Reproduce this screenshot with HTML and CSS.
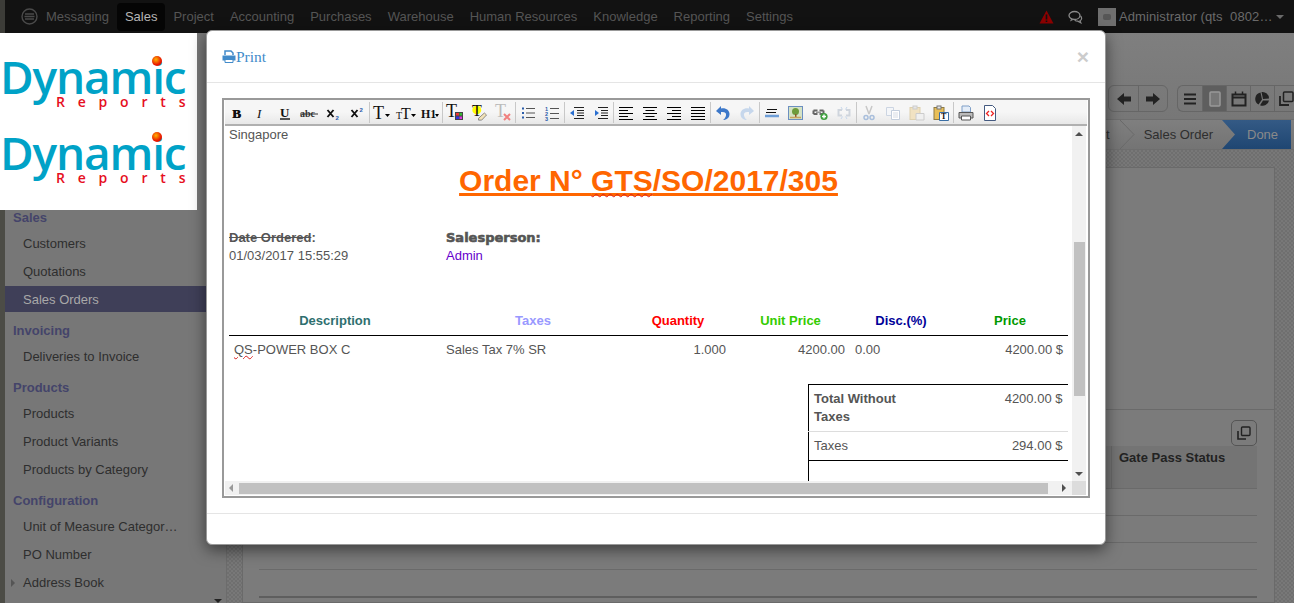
FILE: index.html
```html
<!DOCTYPE html>
<html lang="en">
<head>
    <meta charset="UTF-8">
    <title>Sales Orders</title>
    <link rel="stylesheet" href="styles.css">
</head>
<body>

<div class="page">
    <header class="topbar">
        <svg class="nav-logo" width="17" height="17" viewBox="0 0 17 17"><circle cx="8.5" cy="8.5" r="7.5" fill="none" stroke="#4a4a4a" stroke-width="1.4"/><path d="M4 6h9M3.5 8.5h10M4 11h9" stroke="#4a4a4a" stroke-width="1.6"/></svg>
        <nav class="nav">
            <a>Messaging</a>
            <a class="active">Sales</a>
            <a>Project</a>
            <a>Accounting</a>
            <a>Purchases</a>
            <a>Warehouse</a>
            <a>Human Resources</a>
            <a>Knowledge</a>
            <a>Reporting</a>
            <a>Settings</a>
        </nav>
        <div class="user">
            <svg width="15" height="14" viewBox="0 0 15 14"><path d="M7.5 0.5L14.5 13.5H0.5Z" fill="#8c0000"/><path d="M7.5 4.5v5M7.5 10.5v1.6" stroke="#111" stroke-width="1.6"/></svg>
            <svg class="chat" width="15" height="14" viewBox="0 0 15 14"><ellipse cx="6.5" cy="5.5" rx="5.5" ry="4" fill="none" stroke="#8a8a8a" stroke-width="1.3"/><path d="M3 9L2 11.5 6 9.5" fill="#8a8a8a"/><path d="M12.5 6c2 2 1 4-.5 4.8l.8 2-3-1.6c-1.2 0-2.3-.4-3-1" fill="none" stroke="#8a8a8a" stroke-width="1.2"/></svg>
            <span class="avatar"><i></i></span>
            <span class="user-name">Administrator (qts&nbsp; 0802…</span>
            <span class="caret"></span>
        </div>
    </header>

    <div class="main">
        <aside class="leftcol">
            <div class="logo">
                <div class="logo-mark">
                    <span class="logo-word">Dynamic</span>
                    <span class="logo-ball"></span>
                    <span class="logo-sub">Reports</span>
                </div>
                <div class="logo-mark">
                    <span class="logo-word">Dynamic</span>
                    <span class="logo-ball"></span>
                    <span class="logo-sub">Reports</span>
                </div>
            </div>
            <div class="menu">
                <div class="menu-head">Sales</div>
                <a class="menu-item">Customers</a>
                <a class="menu-item">Quotations</a>
                <a class="menu-item selected">Sales Orders</a>
                <div class="menu-head">Invoicing</div>
                <a class="menu-item">Deliveries to Invoice</a>
                <div class="menu-head">Products</div>
                <a class="menu-item">Products</a>
                <a class="menu-item">Product Variants</a>
                <a class="menu-item">Products by Category</a>
                <div class="menu-head">Configuration</div>
                <a class="menu-item">Unit of Measure Categor…</a>
                <a class="menu-item">PO Number</a>
                <a class="menu-item has-arrow">Address Book</a>
                <span class="menu-down"></span>
            </div>
        </aside>

        <main class="content">
            <div class="control-panel">
                <div class="btn-group">
                    <span class="cp-btn wide"><svg width="16" height="14" viewBox="0 0 16 14"><path d="M8 1L1 7l7 6V9.5h7v-5H8Z" fill="#222"/></svg></span>
                    <span class="cp-btn wide"><svg width="16" height="14" viewBox="0 0 16 14"><path d="M8 1l7 6-7 6V9.5H1v-5h7Z" fill="#222"/></svg></span>
                </div>
                <div class="btn-group views">
                    <span class="cp-btn"><svg width="14" height="12" viewBox="0 0 14 12"><path d="M1 1.5h12M1 6h12M1 10.5h12" stroke="#222" stroke-width="2"/></svg></span>
                    <span class="cp-btn on"><svg width="12" height="16" viewBox="0 0 12 16"><rect x="1" y="1" width="10" height="14" rx="1" fill="#777" stroke="#999" stroke-width="1.5"/></svg></span>
                    <span class="cp-btn"><svg width="16" height="16" viewBox="0 0 16 16"><path d="M1.5 3.5h13v11h-13zM1.5 6.5h13" fill="none" stroke="#222" stroke-width="2"/><path d="M4.5 0.5v3M11.5 0.5v3" stroke="#222" stroke-width="1.5"/></svg></span>
                    <span class="cp-btn"><svg width="15" height="15" viewBox="0 0 15 15"><path d="M6.5 1a6.5 6.5 0 0 1 7.5 6.5L8 8Z" fill="#222"/><path d="M5.5 1.5L7 8.5 3.5 13.5A6.5 6.5 0 0 1 5.5 1.5Z" fill="#222"/><path d="M8 9.5h6A6.5 6.5 0 0 1 5 14.2Z" fill="#222"/></svg></span>
                    <span class="cp-btn"><svg width="15" height="15" viewBox="0 0 15 15"><rect x="4.5" y="1" width="9.5" height="9.5" rx="1" fill="none" stroke="#222" stroke-width="1.5"/><path d="M1 5v9h9" fill="none" stroke="#222" stroke-width="1.8"/></svg></span>
                </div>
            </div>

            <div class="statusbar">
                <span class="stage">nt</span>
                <svg class="chev" width="16" height="29" viewBox="0 0 16 29"><path d="M1 0l14 14.5L1 29" fill="none" stroke="#6a6a6a"/></svg>
                <span class="stage">Sales Order</span>
                <span class="stage done">Done</span>
            </div>

            <div class="sheet-bg">
                <div class="sheet">
                    <div class="sheet-top"></div>
                    <div class="sheet-body">
                        <div class="sheet-tools">
                            <span class="copy-btn"><svg width="14" height="14" viewBox="0 0 14 14"><rect x="4.5" y="1" width="8.5" height="8.5" rx="1" fill="none" stroke="#222" stroke-width="1.4"/><path d="M1 5v8h8" fill="none" stroke="#222" stroke-width="1.6"/></svg></span>
                        </div>
                        <div class="grid-head"><span class="grid-col">Gate Pass Status</span></div>
                        <div class="grid-row"></div>
                        <div class="grid-row"></div>
                        <div class="grid-row"></div>
                        <div class="grid-row last"></div>
                    </div>
                </div>
            </div>
        </main>
    </div>
</div>

<!-- print preview dialog -->
<div class="modal">
    <div class="modal-header">
        <a class="print-link">
            <svg width="14" height="13" viewBox="0 0 14 13"><path d="M3 5V1h6l2 2v2" fill="none" stroke="#428bca" stroke-width="1.5"/><path d="M0.5 5.5h13v5H11V9H3v1.5H.5Z" fill="#428bca"/><path d="M3 9.5h8v3H3z" fill="#fff" stroke="#428bca"/></svg>Print</a>
        <span class="close">×</span>
    </div>
    <div class="modal-body">
        <div class="editor">
            <div class="toolbar">
                <span class="tb"><svg viewBox="0 0 16 16"><text x="3" y="13" class="ic-serif">B</text><text x="3.8" y="13" class="ic-serif">B</text></svg></span>
                <span class="tb"><svg viewBox="0 0 16 16"><text x="4" y="13" class="ic-serif ital">I</text></svg></span>
                <span class="tb"><svg viewBox="0 0 16 16"><text x="3" y="11.5" class="ic-serif">U</text><path d="M3 14h10" stroke="#000" stroke-width="1.3"/></svg></span>
                <span class="tb"><svg viewBox="0 0 18 16" class="w18"><text x="0" y="12" class="ic-serif small">abc</text><path d="M0 9h18" stroke="#333"/></svg></span>
                <span class="tb"><svg viewBox="0 0 16 16"><path d="M2.5 5l6 7M8.5 5l-6 7" stroke="#111" stroke-width="1.9"/><text x="10.5" y="14.5" class="ic-mini">2</text></svg></span>
                <span class="tb"><svg viewBox="0 0 16 16"><path d="M2.5 5l6 7M8.5 5l-6 7" stroke="#111" stroke-width="1.9"/><text x="10.5" y="6.5" class="ic-mini">2</text></svg></span>
                <span class="tb-sep"></span>
                <span class="tb"><svg viewBox="0 0 18 16" class="w18"><text x="0" y="14" class="ic-serif big">T</text><path d="M12 9h5l-2.5 3Z"/></svg></span>
                <span class="tb"><svg viewBox="0 0 20 16" class="w20"><text x="0" y="14" class="ic-serif mid">T</text><text x="5" y="14" class="ic-serif big2">T</text><path d="M15 9h5l-2.5 3Z"/></svg></span>
                <span class="tb"><svg viewBox="0 0 20 16" class="w20"><text x="1" y="13" class="ic-serif h1">H1</text><path d="M15 9h4l-2 3Z"/></svg></span>
                <span class="tb-sep"></span>
                <span class="tb"><svg viewBox="0 0 18 16" class="w18"><text x="0" y="12" class="ic-serif big">T</text><rect x="9" y="7" width="8" height="8" fill="#444"/><path d="M10 8h3v2.5h-3z" fill="#e33"/><path d="M13.5 8H16v2.5h-2.5z" fill="#3b3"/><path d="M10 11.5h3V14h-3z" fill="#33d"/><path d="M13.5 11.5H16V14h-2.5z" fill="#d3d"/></svg></span>
                <span class="tb"><svg viewBox="0 0 18 18" class="w18"><circle cx="6.5" cy="5.5" r="5" fill="#ff0"/><text x="1" y="12" class="ic-serif big">T</text><path d="M8.5 15l6.5-6 2.5 2.2-5.5 5.8H8.5Z" fill="#f3e3b8" stroke="#666" stroke-width=".8"/></svg></span>
                <span class="tb"><svg viewBox="0 0 18 16" class="w18"><text x="1" y="12" class="ic-serif big fade">T</text><path d="M10 9l6 6M16 9l-6 6" stroke="#f08080" stroke-width="2"/></svg></span>
                <span class="tb-sep"></span>
                <span class="tb"><svg viewBox="0 0 16 16"><path d="M2 3.5h2M2 8h2M2 12.5h2" stroke="#2a5caa" stroke-width="2.2"/><path d="M6 3.5h9M6 8h9M6 12.5h9" stroke="#555"/></svg></span>
                <span class="tb"><svg viewBox="0 0 16 16"><text x="1" y="5.5" class="ic-num">1</text><text x="1" y="10.5" class="ic-num">2</text><text x="1" y="15.5" class="ic-num">3</text><path d="M6 3.5h9M6 8.5h9M6 13.5h9" stroke="#555"/></svg></span>
                <span class="tb-sep"></span>
                <span class="tb"><svg viewBox="0 0 16 16"><path d="M1 8l4-3v6Z" fill="#2a6fd0"/><path d="M5 2.5h10M8 5.5h7M8 8h7M8 10.5h7M5 13.5h10" stroke="#222" stroke-width="1.2"/></svg></span>
                <span class="tb"><svg viewBox="0 0 16 16"><path d="M6 8L2 5v6Z" fill="#2a6fd0"/><path d="M5 2.5h10M8 5.5h7M8 8h7M8 10.5h7M5 13.5h10" stroke="#222" stroke-width="1.2"/></svg></span>
                <span class="tb-sep"></span>
                <span class="tb"><svg viewBox="0 0 16 16"><path d="M1 2.5h14M1 5.5h9M1 8.5h14M1 11.5h9M1 14.5h14" stroke="#000"/></svg></span>
                <span class="tb"><svg viewBox="0 0 16 16"><path d="M1 2.5h14M3.5 5.5h9M1 8.5h14M3.5 11.5h9M1 14.5h14" stroke="#000"/></svg></span>
                <span class="tb"><svg viewBox="0 0 16 16"><path d="M1 2.5h14M6 5.5h9M1 8.5h14M6 11.5h9M1 14.5h14" stroke="#000"/></svg></span>
                <span class="tb"><svg viewBox="0 0 16 16"><path d="M1 2.5h14M1 5.5h14M1 8.5h14M1 11.5h14M1 14.5h14" stroke="#000"/></svg></span>
                <span class="tb-sep"></span>
                <span class="tb"><svg viewBox="0 0 16 16"><path d="M6 1L1 6l5 4V7c4-.5 5.5 1 5 3.5-.3 1.8-1.5 3.5-3 4.5 4 0 6.5-2.5 6.5-6 0-4-4-6.5-8.5-5.5Z" fill="#3d78c9"/></svg></span>
                <span class="tb"><svg viewBox="0 0 16 16"><path d="M10 1l5 5-5 4V7c-4-.5-5.5 1-5 3.5.3 1.8 1.5 3.5 3 4.5-4 0-6.5-2.5-6.5-6 0-4 4-6.5 8.5-5.5Z" fill="#c6d7ec"/></svg></span>
                <span class="tb-sep"></span>
                <span class="tb"><svg viewBox="0 0 16 16"><path d="M3 4.5h10M2 7.5h10" stroke="#111"/><path d="M1 11h14" stroke="#6f9fd8" stroke-width="2.5"/></svg></span>
                <span class="tb"><svg viewBox="0 0 16 16"><rect x=".5" y="1.5" width="14" height="13" fill="#d5e3c5" stroke="#6c8fc0"/><circle cx="7.5" cy="6.5" r="3.5" fill="#6e9b3c"/><path d="M7 9h1.5v3H7Z" fill="#8a5a2b"/><path d="M2 12.5h11" stroke="#c9a25f" stroke-width="1.5"/></svg></span>
                <span class="tb"><svg viewBox="0 0 16 16"><path d="M1.5 5.5h4M7.5 5.5h4M1.5 9h4M7.5 9h4" stroke="#666" stroke-width="2"/><path d="M1.5 5.5v3.5M11.5 5.5V9" stroke="#666" stroke-width="2"/><path d="M4 7.3h5" stroke="#999" stroke-width="1.6"/><circle cx="12" cy="11.5" r="3.6" fill="#3f9f3f"/><path d="M10 11.5h4M12 9.5v4" stroke="#fff" stroke-width="1.4"/></svg></span>
                <span class="tb"><svg viewBox="0 0 16 16"><path d="M6 5H2.5v5.5H6M10 5h3.5v5.5H10" fill="none" stroke="#cfd5dd" stroke-width="2"/><path d="M5 2l1.5 2.5M11 2L9.5 4.5M5 14l1.5-2.5M11 14l-1.5-2.5" stroke="#c6d7ec"/></svg></span>
                <span class="tb-sep"></span>
                <span class="tb"><svg viewBox="0 0 16 16"><path d="M5 1l3 8M11 1L8 9" stroke="#c8c8c8" stroke-width="1.5"/><circle cx="5" cy="12.5" r="2" fill="none" stroke="#a9bfdc" stroke-width="1.5"/><circle cx="11" cy="12.5" r="2" fill="none" stroke="#a9bfdc" stroke-width="1.5"/></svg></span>
                <span class="tb"><svg viewBox="0 0 16 16"><path d="M1.5 2.5h7v8h-7z" fill="#f4f6f9" stroke="#ccd5e2"/><path d="M6.5 5.5h8v9h-8z" fill="#fff" stroke="#c3cedd"/><path d="M8 8h5M8 10h5M8 12h5" stroke="#d5dbe4"/></svg></span>
                <span class="tb"><svg viewBox="0 0 16 16"><rect x="1" y="2.5" width="10" height="12" fill="#f1e2c2" stroke="#ddd0ae"/><rect x="4" y="1" width="4" height="3" fill="#e6e6e6" stroke="#ccc"/><path d="M7 8.5h8v6.5H7z" fill="#f0f0f0" stroke="#ccc"/></svg></span>
                <span class="tb"><svg viewBox="0 0 16 16"><rect x="1" y="2.5" width="10" height="12" fill="#e8bf58" stroke="#8d7b45"/><rect x="4" y="1" width="4" height="3" fill="#e6e6e6" stroke="#777"/><path d="M6.5 7.5h9v8h-9z" fill="#fff" stroke="#3a6ea5"/><text x="8" y="14.3" class="ic-serif t-mini">T</text></svg></span>
                <span class="tb-sep"></span>
                <span class="tb"><svg viewBox="0 0 16 16"><path d="M4 1h7l1.5 1.5V7H4Z" fill="#e4edf8" stroke="#7f9fc7"/><path d="M1 7.5h14v5.5H1Z" fill="#bbb" stroke="#555"/><path d="M3.5 11h9v4h-9Z" fill="#fff" stroke="#555"/></svg></span>
                <span class="tb"><svg viewBox="0 0 16 16"><path d="M2.5 .5h8l3 3v12h-11Z" fill="#fff" stroke="#445a80"/><path d="M7 6L4.5 8.5 7 11M9 6l2.5 2.5L9 11" fill="none" stroke="#e22" stroke-width="1.3"/></svg></span>
            </div>
            <div class="editor-view">
                <div class="editor-main">
                    <div class="doc">
                        <p class="address">Singapore</p>
                        <h2 class="order-title">Order N° <span class="misspelt">GTS</span>/SO/2017/305</h2>
                        <div class="meta">
                            <div class="meta-col">
                                <strong><s>Date Ordered</s>:</strong>
                                <span>01/03/2017 15:55:29</span>
                            </div>
                            <div class="meta-col">
                                <strong class="heavy">Salesperson:</strong>
                                <span class="admin">Admin</span>
                            </div>
                        </div>
                        <table class="lines">
                            <colgroup><col class="c1"><col class="c2"><col class="c3"><col class="c4"><col class="c5"><col class="c6"></colgroup>
                            <thead>
                                <tr>
                                    <th class="h-desc">Description</th>
                                    <th class="h-tax">Taxes</th>
                                    <th class="h-qty">Quantity</th>
                                    <th class="h-unit">Unit Price</th>
                                    <th class="h-disc">Disc.(%)</th>
                                    <th class="h-price">Price</th>
                                </tr>
                            </thead>
                            <tbody>
                                <tr>
                                    <td><span class="misspelt-small">QS</span>-POWER BOX C</td>
                                    <td>Sales Tax 7% SR</td>
                                    <td class="num">1.000</td>
                                    <td class="num">4200.00</td>
                                    <td>0.00</td>
                                    <td class="num">4200.00 $</td>
                                </tr>
                            </tbody>
                        </table>
                        <table class="totals">
                            <colgroup><col class="t1"><col class="t2"></colgroup>
                            <tr class="t-first">
                                <td><strong>Total Without Taxes</strong></td>
                                <td class="num">4200.00 $</td>
                            </tr>
                            <tr class="t-tax">
                                <td>Taxes</td>
                                <td class="num">294.00 $</td>
                            </tr>
                            <tr class="t-empty"><td colspan="2"></td></tr>
                        </table>
                    </div>
                    <div class="vscroll">
                        <span class="arrow up"></span>
                        <div class="vtrack"><div class="vthumb"></div></div>
                        <span class="arrow down"></span>
                    </div>
                </div>
                <div class="hscroll">
                    <span class="arrow left"></span>
                    <div class="hthumb"></div>
                    <span class="arrow right"></span>
                    <span class="corner"></span>
                </div>
            </div>
        </div>
    </div>
    <div class="modal-footer"></div>
</div>

</body>
</html>
```
FILE: styles.css
```css
html, body {
    margin: 0;
    height: 100%;
    overflow: hidden;
}

body {
    background-color: #7b7b7b;
    color: #222;
    font-family: "Liberation Sans", Arial, sans-serif;
    font-size: 13px;
}

.page {
    display: flex;
    flex-direction: column;
    height: 603px;
}

/* top bar */
.topbar {
    display: flex;
    align-items: center;
    flex: none;
    height: 33px;
    background-color: #121212;
    box-sizing: border-box;
    padding-left: 16px;
    border-left: 5px solid #3c3c38;
}

.nav-logo {
    flex: none;
}

.nav {
    display: flex;
    align-items: center;
    flex: 1;
}

.nav a {
    padding: 7px 8px;
    line-height: 14px;
    color: #555;
    border-radius: 4px;
    white-space: nowrap;
}

.nav a.active {
    color: #b5b5b5;
    background-color: #050505;
}

.user {
    display: flex;
    align-items: center;
    color: #6a6a6a;
    padding-right: 10px;
}

.chat {
    margin-left: 14px;
}

.avatar {
    display: flex;
    align-items: center;
    justify-content: center;
    width: 18px;
    height: 18px;
    margin-left: 15px;
    background-color: #6f6f6f;
}

.avatar i {
    display: block;
    width: 8px;
    height: 6px;
    background-color: #565656;
    border-radius: 2px;
}

.user-name {
    margin-left: 3px;
    white-space: nowrap;
    width: 156px;
    letter-spacing: .1px;
}

.caret {
    width: 0;
    height: 0;
    border: 4px solid transparent;
    border-top-color: #6a6a6a;
    border-bottom: 0;
    margin-left: 1px;
}

.main {
    display: flex;
    flex: 1;
    min-height: 0;
}

/* left column */
.leftcol {
    display: flex;
    flex-direction: column;
    flex: none;
    width: 226px;
    background-color: #777;
}

.logo {
    flex: none;
    box-sizing: border-box;
    width: 197px;
    height: 177px;
    padding: 18px 0 0;
    background-color: #fff;
}

.logo-mark {
    position: relative;
    height: 76px;
}

.logo-word {
    display: block;
    font-family: "Open Sans", sans-serif;
    font-size: 46px;
    font-weight: 600;
    line-height: 50px;
    letter-spacing: -1.2px;
    color: #00a2c7;
}

.logo-ball {
    position: absolute;
    left: 152px;
    top: 5px;
    width: 10px;
    height: 10px;
    border-radius: 50%;
    background: radial-gradient(circle at 40% 35%, #ffb300, #e81500 60%);
}

.logo-sub {
    position: absolute;
    left: 56px;
    top: 43px;
    font-family: "Open Sans", sans-serif;
    font-size: 14px;
    font-weight: 600;
    line-height: 16px;
    letter-spacing: 12.8px;
    color: #e60f1e;
    white-space: nowrap;
}

.menu {
    position: relative;
    flex: 1;
    border-left: 5px solid #4c4c46;
}

.menu-head {
    height: 18px;
    line-height: 18px;
    margin: 9px 0 4px;
    padding-left: 8px;
    font-weight: bold;
    color: #44446a;
}

.menu-head:first-child {
    margin-top: -1px;
}

.menu-item {
    display: block;
    height: 26px;
    line-height: 26px;
    margin-bottom: 2px;
    padding-left: 18px;
    color: #2e2e2e;
    white-space: nowrap;
}

.menu-item.selected {
    margin-top: -1px;
    margin-bottom: 3px;
    line-height: 28px;
    background-color: #3f3f58;
    color: #a8a8a8;
}

.selected + .menu-head {
    margin-top: 10px;
}

.has-arrow::before {
    content: "";
    position: absolute;
    left: 6px;
    margin-top: 9px;
    border: 4px solid transparent;
    border-left-color: #555;
    border-right: 0;
}

.menu-down {
    position: absolute;
    right: 4px;
    bottom: 0;
    border: 4px solid transparent;
    border-top-color: #222;
    border-bottom: 0;
}

/* form view behind the dialog */
.content {
    display: flex;
    flex-direction: column;
    flex: 1;
    min-width: 0;
    border-left: 1px solid #6c6c6c;
}

.control-panel {
    display: flex;
    justify-content: flex-end;
    gap: 9px;
    flex: none;
    box-sizing: border-box;
    height: 87px;
    padding: 52px 0 0;
    overflow: hidden;
    border-bottom: 1px solid #6e6e6e;
    background: linear-gradient(#7f7f7f, #777);
}

.btn-group {
    display: flex;
    height: 25px;
    border: 1px solid #666;
    border-radius: 6px;
}

.btn-group.views {
    width: 116px;
    border-right: 0;
    border-radius: 6px 0 0 6px;
}

.cp-btn {
    display: flex;
    align-items: center;
    justify-content: center;
    flex: none;
    width: 24px;
    border-left: 1px solid #666;
    box-sizing: border-box;
}

.cp-btn:first-child {
    border-left: 0;
}

.cp-btn.wide {
    width: 29px;
}

.cp-btn.on {
    background-color: #5e5e5e;
}

.statusbar {
    display: flex;
    align-items: stretch;
    justify-content: flex-end;
    flex: none;
    height: 29px;
    padding-right: 3px;
    background: linear-gradient(#7f7f7f, #747474);
    border-bottom: 1px solid #6e6e6e;
}

.stage {
    display: flex;
    align-items: center;
    padding: 0 9px 1px;
    color: #2e2e2e;
    white-space: nowrap;
}

.chev {
    flex: none;
}

.stage.done {
    width: 69px;
    box-sizing: border-box;
    padding-left: 25px;
    color: #8a8a8a;
    background: linear-gradient(#345a85, #1f4672);
    clip-path: polygon(0 0, 100% 0, 100% 100%, 0 100%, 13px 50%);
}

.sheet-bg {
    flex: 1;
    min-height: 0;
    padding: 17px 19px 0 15px;
    background: repeating-conic-gradient(#6f6f6f 0 25%, #787878 0 50%) 0 0 / 4px 4px;
}

.sheet {
    height: 100%;
    box-sizing: border-box;
    background-color: #7b7b7b;
    border: 1px solid #6a6a6a;
}

.sheet-top {
    height: 241px;
    border-bottom: 1px solid #6a6a6a;
}

.sheet-body {
    padding: 10px 17px 0 16px;
}

.sheet-tools {
    display: flex;
    justify-content: flex-end;
}

.copy-btn {
    display: flex;
    align-items: center;
    justify-content: center;
    width: 24px;
    height: 24px;
    border: 1px solid #555;
    border-radius: 5px;
}

.grid-head {
    display: flex;
    justify-content: flex-end;
    height: 42px;
    background-color: #747474;
    border-bottom: 1px solid #6a6a6a;
}

.grid-col {
    box-sizing: border-box;
    width: 146px;
    padding: 4px 0 0 7px;
    border-left: 1px solid #6a6a6a;
    font-weight: bold;
}

.grid-row {
    height: 26px;
    border-bottom: 1px solid #6a6a6a;
}

.grid-row.last {
    border-bottom: 2px solid #5e5e5e;
}

/* dialog */
.modal {
    position: absolute;
    left: 206px;
    top: 30px;
    box-sizing: border-box;
    width: 900px;
    height: 515px;
    display: flex;
    flex-direction: column;
    background-color: #fff;
    border: 1px solid #999;
    border-radius: 6px;
    box-shadow: 0 5px 15px rgba(0, 0, 0, 0.5);
}

.modal-header {
    display: flex;
    align-items: center;
    justify-content: space-between;
    flex: none;
    box-sizing: border-box;
    height: 52px;
    padding: 0 16px 0 15px;
    border-bottom: 1px solid #e5e5e5;
}

.print-link {
    display: flex;
    align-items: center;
    font-family: "Liberation Serif", serif;
    font-size: 15.5px;
    color: #428bca;
}

.close {
    font-size: 21px;
    font-weight: bold;
    color: #ccc;
    line-height: 1;
}

.modal-body {
    flex: none;
    padding: 15px;
}

.modal-footer {
    flex: 1;
    border-top: 1px solid #e5e5e5;
}

.editor {
    box-sizing: border-box;
    width: 868px;
    height: 400px;
    display: flex;
    flex-direction: column;
    border: 2px solid #999;
    padding: 0 1px 1px;
}

.toolbar {
    display: flex;
    flex: none;
    height: 23px;
    padding-top: 1px;
    background: linear-gradient(#f6f6f6 50%, #e8e8e8);
    border-bottom: 2px solid #b0b0b0;
}

.tb {
    display: flex;
    align-items: center;
    justify-content: center;
    flex: none;
    width: 24px;
}

.tb svg {
    width: 16px;
    height: 16px;
    flex: none;
    overflow: visible;
}

.tb svg.w18 {
    width: 18px;
}

.tb svg.w20 {
    width: 20px;
}

.tb-sep {
    flex: none;
    width: 1px;
    margin: 1px 0;
    background-color: #c8c8c8;
}

.ic-serif {
    font-family: "Liberation Serif", serif;
    font-size: 13px;
    font-weight: bold;
    fill: #111;
}

.ic-serif.ital {
    font-style: italic;
    font-weight: normal;
}

.ic-serif.small {
    font-size: 10px;
    fill: #333;
}

.ic-serif.big {
    font-size: 18px;
    font-weight: normal;
}

.ic-serif.big2 {
    font-size: 16px;
    font-weight: normal;
}

.ic-serif.mid {
    font-size: 10px;
    font-weight: normal;
}

.ic-serif.h1 {
    font-size: 12px;
}

.ic-serif.fade {
    fill: #bbb;
}

.ic-serif.t-mini {
    font-size: 8px;
}

.ic-mini {
    font-family: "Liberation Sans", sans-serif;
    font-size: 6px;
    font-weight: bold;
    fill: #2a5caa;
}

.ic-num {
    font-family: "Liberation Sans", sans-serif;
    font-size: 5.5px;
    font-weight: bold;
    fill: #2a5caa;
}

.editor-view {
    display: flex;
    flex-direction: column;
    flex: 1;
    min-height: 0;
}

.editor-main {
    display: flex;
    flex: 1;
    min-height: 0;
}

.doc {
    flex: 1;
    min-width: 0;
    overflow: hidden;
    padding: 0 4px;
    color: #555;
    line-height: 18px;
}

.address {
    margin: 0;
    height: 18px;
    line-height: 17px;
}

.order-title {
    margin: 15px 0 0;
    height: 43px;
    font-size: 30px;
    line-height: 43px;
    text-align: center;
    text-decoration: underline;
    color: #ff6600;
}

.misspelt {
    text-decoration: underline wavy #d92020 1px;
    text-underline-offset: 2px;
}

.misspelt-small {
    text-decoration: underline wavy #d92020 1px;
}

.meta {
    display: flex;
    margin-top: 27px;
}

.meta-col {
    display: flex;
    flex-direction: column;
    width: 217px;
}

.heavy {
    font-family: "DejaVu Sans", sans-serif;
    font-size: 13px;
    -webkit-text-stroke: .6px #555;
}

.admin {
    color: #6600cc;
}

.lines {
    width: 839px;
    margin-top: 44px;
    table-layout: fixed;
    border-collapse: collapse;
}

.c1 { width: 212px; }
.c2 { width: 184px; }
.c3 { width: 106px; }
.c4 { width: 119px; }
.c5 { width: 102px; }
.c6 { width: 116px; }

.lines th {
    height: 24px;
    padding: 0 5px 2px;
    font-weight: bold;
    text-align: center;
    border-bottom: 1px solid #000;
}

.lines td {
    height: 28px;
    padding: 0 5px;
    white-space: nowrap;
}

.num {
    text-align: right;
}

.h-desc { color: #2f6f6f; }
.h-tax { color: #9999ff; }
.h-qty { color: #ff0000; }
.h-unit { color: #33cc00; }
.h-disc { color: #000099; }
.h-price { color: #009900; }

.totals {
    width: 259px;
    margin: 20px 0 0 579px;
    table-layout: fixed;
    border-collapse: collapse;
    border-left: 1px solid #000;
    border-top: 1px solid #000;
}

.t1 { width: 110px; }
.t2 { width: 149px; }

.totals td {
    padding: 5px 5px 4px;
    vertical-align: top;
}

.t-first td {
    padding-bottom: 5px;
    border-bottom: 1px solid #ddd;
}

.t-tax td {
    height: 19px;
    border-bottom: 1px solid #000;
}

.t-empty td {
    height: 30px;
}

.vscroll {
    display: flex;
    flex-direction: column;
    flex: none;
    width: 14px;
    margin-right: 1px;
    background-color: #f1f1f1;
}

.vtrack {
    flex: 1;
    padding: 102px 1px 0 2px;
}

.vthumb {
    height: 154px;
    background-color: #c1c1c1;
}

.arrow {
    display: flex;
    flex: none;
    width: 0;
    height: 0;
    border: 4px solid transparent;
}

.arrow.up {
    margin: 6px auto 4px;
    border-bottom-color: #505050;
    border-top: 0;
}

.arrow.down {
    margin: 4px auto 5px;
    border-top-color: #505050;
    border-bottom: 0;
}

.hscroll {
    display: flex;
    align-items: stretch;
    flex: none;
    height: 14px;
    margin-right: 1px;
    background-color: #f1f1f1;
}

.hthumb {
    width: 809px;
    margin: 2px 0 1px;
    background-color: #c1c1c1;
}

.arrow.left {
    align-self: center;
    margin: 0 6px 0 4px;
    border-right-color: #999;
    border-left: 0;
}

.arrow.right {
    align-self: center;
    margin: 0 0 0 14px;
    border-left-color: #505050;
    border-right: 0;
}

.corner {
    flex: none;
    width: 14px;
    margin-left: auto;
    background-color: #dcdcdc;
}
```
